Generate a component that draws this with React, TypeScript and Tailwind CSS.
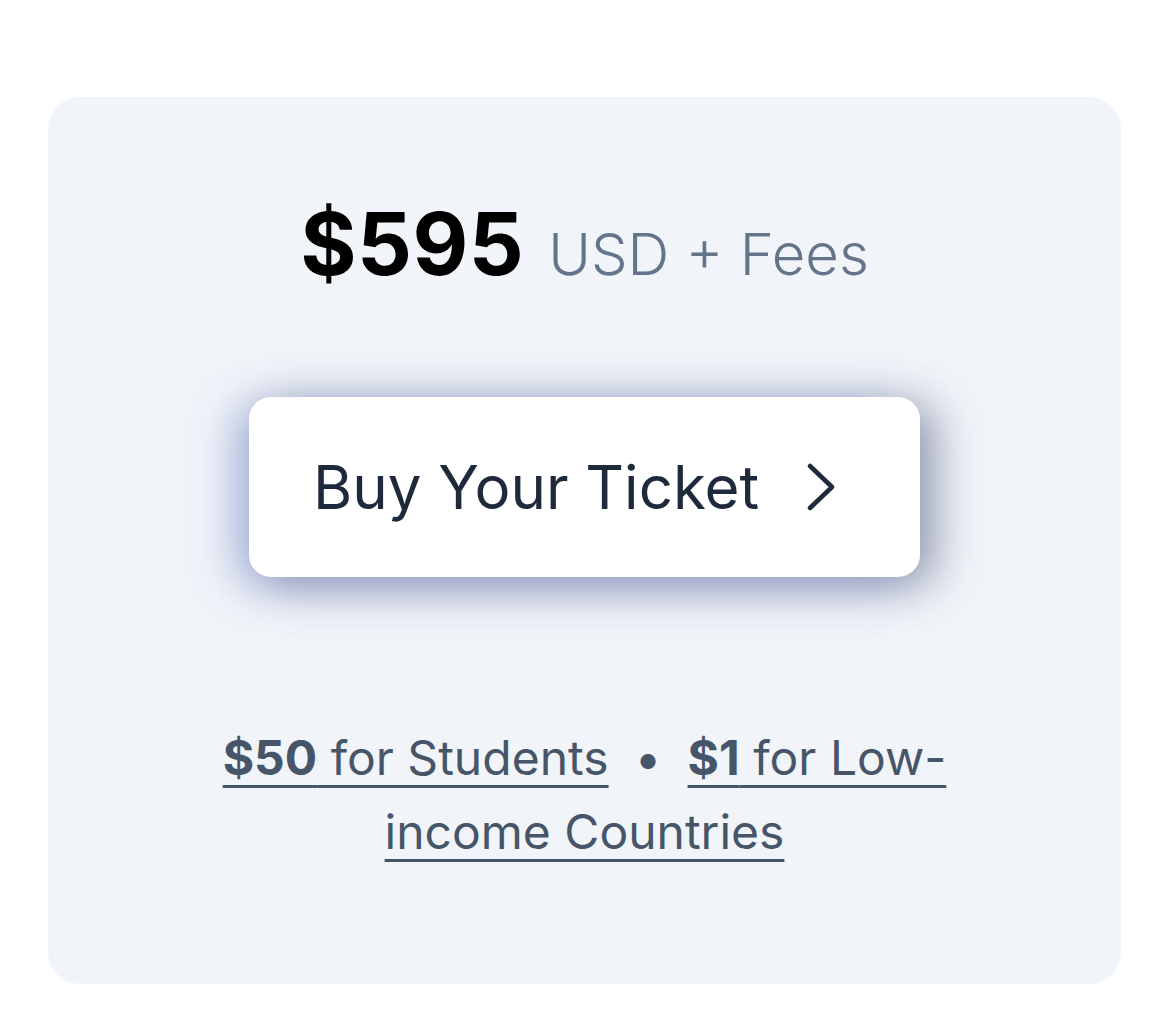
export default function App() {
  return (
    <div className="min-h-screen w-full bg-white pt-[97px] px-[48px] font-['Inter',sans-serif]">
      <div className="w-[1073px] h-[887px] rounded-[32px] bg-[#f1f4f9] flex flex-col items-center">
        {/* Price */}
        <div className="mt-[104px] flex items-baseline gap-[24px]">
          <span className="text-[86px] font-bold tracking-[0.5px] text-black leading-none">$595</span>
          <span className="text-[58px] font-light text-[#64748b] leading-none">USD + Fees</span>
        </div>

        {/* CTA */}
        <button className="mt-[110px] w-[671px] h-[180px] rounded-[22px] bg-white flex items-center pl-[64px] shadow-[-16px_8px_44px_rgba(120,140,205,0.5),16px_8px_44px_rgba(70,80,110,0.5)]">
          <span className="text-[60px] font-normal text-[#1e293b] leading-none">Buy Your Ticket</span>
          <svg className="ml-[46px]" width="34" height="50" viewBox="0 0 34 50" fill="none">
            <polyline points="5,4 27,25 5,46" stroke="#1e293b" strokeWidth="4.5" strokeLinecap="round" strokeLinejoin="round" />
          </svg>
        </button>

        {/* Discounts */}
        <p className="mt-[144px] w-[740px] text-center text-[48px] leading-[74px] text-[#475569]">
          <a href="#" className="underline decoration-[3px] underline-offset-[10px]">
            <span className="font-bold">$50</span> for Students
          </a>
          <span className="mx-[26px]">•</span>
          <a href="#" className="underline decoration-[3px] underline-offset-[10px]">
            <span className="font-bold">$1</span> for Low-income Countries
          </a>
        </p>
      </div>
    </div>
  )
}
